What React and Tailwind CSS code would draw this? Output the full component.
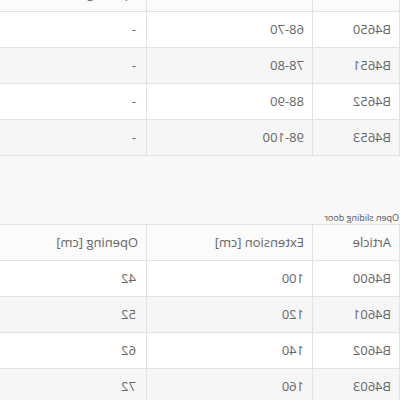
const COLS = ['Article', 'Extension [cm]', 'Opening [cm]'];

const TOP_ROWS = [
  ['B4650', '68-70', '-'],
  ['B4651', '78-80', '-'],
  ['B4652', '88-90', '-'],
  ['B4653', '98-100', '-'],
];

const BOTTOM_ROWS = [
  ['B4600', '100', '42'],
  ['B4601', '120', '52'],
  ['B4602', '140', '62'],
  ['B4603', '160', '72'],
];

function SpecTable({ rows, className = '' }) {
  return (
    <table className={`w-[430px] border-collapse table-fixed text-[13px] text-[#666] ${className}`}>
      <colgroup>
        <col className="w-[87px]" />
        <col className="w-[166px]" />
        <col />
      </colgroup>
      <thead>
        <tr className="h-[36px] bg-[#fbfbfb]">
          {COLS.map((c) => (
            <th key={c} className="border border-[#e2e2e2] px-2 text-left font-normal">
              {c}
            </th>
          ))}
        </tr>
      </thead>
      <tbody>
        {rows.map((r, i) => (
          <tr key={r[0]} className={`h-[36px] ${i % 2 ? 'bg-[#f6f6f6]' : 'bg-white'}`}>
            {r.map((v, j) => (
              <td key={j} className={`border border-[#e2e2e2] text-left ${j === 2 ? 'px-[10px]' : 'px-2'}`}>
                {v}
              </td>
            ))}
          </tr>
        ))}
      </tbody>
    </table>
  );
}

export default function App() {
  return (
    <div className="w-[400px] h-[400px] overflow-hidden bg-[#f8f8f8] -scale-x-100 font-['Open_Sans',sans-serif]">
      <div className="flex flex-col -mt-[25px]">
        <SpecTable rows={TOP_ROWS} />
        <p className="mt-[56px] mb-[1px] pl-[1px] text-[9px] leading-[11px] text-[#555]">Open sliding door</p>
        <SpecTable rows={BOTTOM_ROWS} />
      </div>
    </div>
  );
}
